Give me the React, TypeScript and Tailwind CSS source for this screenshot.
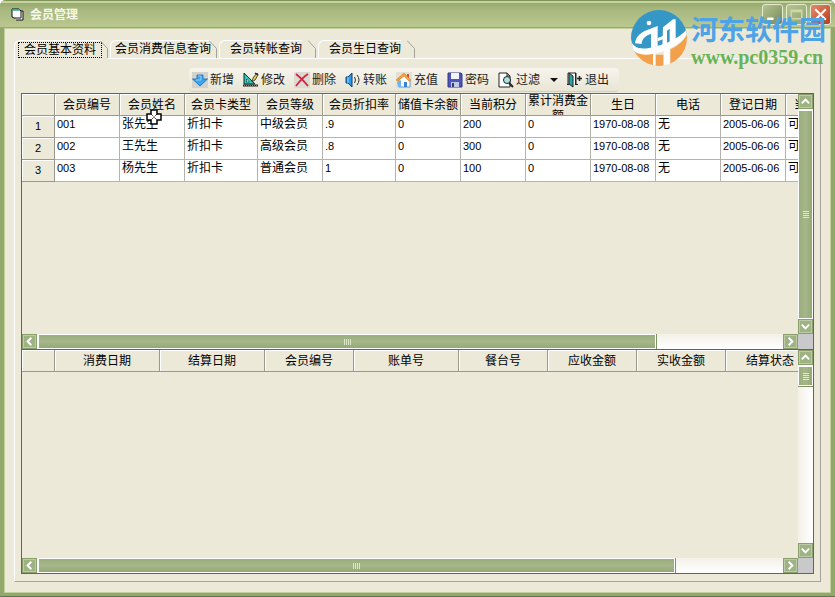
import type { ReactNode } from "react";

type Column = { title: string; width: string };

const memberColumns: Column[] = [
  { title: "会员编号", width: "w-[65px]" },
  { title: "会员姓名", width: "w-[65px]" },
  { title: "会员卡类型", width: "w-[73px]" },
  { title: "会员等级", width: "w-[65px]" },
  { title: "会员折扣率", width: "w-[73px]" },
  { title: "储值卡余额", width: "w-[65px]" },
  { title: "当前积分", width: "w-[65px]" },
  { title: "累计消费金额", width: "w-[65px]" },
  { title: "生日", width: "w-[65px]" },
  { title: "电话", width: "w-[65px]" },
  { title: "登记日期", width: "w-[65px]" },
  { title: "当前状态", width: "w-[65px]" },
];

const members = [
  ["001", "张先生", "折扣卡", "中级会员", ".9", "0", "200", "0", "1970-08-08", "无", "2005-06-06", "可用"],
  ["002", "王先生", "折扣卡", "高级会员", ".8", "0", "300", "0", "1970-08-08", "无", "2005-06-06", "可用"],
  ["003", "杨先生", "折扣卡", "普通会员", "1", "0", "100", "0", "1970-08-08", "无", "2005-06-06", "可用"],
];

const billColumns: Column[] = [
  { title: "消费日期", width: "w-[105px]" },
  { title: "结算日期", width: "w-[105px]" },
  { title: "会员编号", width: "w-[89px]" },
  { title: "账单号", width: "w-[105px]" },
  { title: "餐台号", width: "w-[89px]" },
  { title: "应收金额", width: "w-[89px]" },
  { title: "实收金额", width: "w-[89px]" },
  { title: "结算状态", width: "w-[89px]" },
];

function Icon({ children }: { children: ReactNode }) {
  return (
    <svg viewBox="0 0 16 16" className="h-4 w-4 shrink-0" aria-hidden="true">
      {children}
    </svg>
  );
}

const tools = [
  {
    label: "新增",
    icon: (
      <Icon>
        <rect width="16" height="16" fill="#d3d2cb" />
        <path d="M5 3h6v4h4.500L8 14 .5 7H5z" fill="#3ba4ee" stroke="#1668b8" strokeWidth=".8" />
        <path d="M6 4h3v4H4" fill="none" stroke="#8fd3fb" />
      </Icon>
    ),
  },
  {
    label: "修改",
    icon: (
      <Icon>
        <path d="M1 1v11h11z" fill="#35c6b4" stroke="#0b2d33" />
        <path d="M3.500 7v3h3z" fill="#fff" stroke="#0b2d33" strokeWidth=".6" />
        <path d="M0 13.500h15" stroke="#222" strokeWidth="2" />
        <path d="M1 13.500h13" stroke="#8b8b8b" strokeDasharray="1 1" />
        <path d="M14 1l-4 5-1 4 3-2 3-5z" fill="#f1cf53" stroke="#222" strokeWidth=".8" />
        <path d="M12 1l3 2" stroke="#222" strokeWidth="1.500" />
      </Icon>
    ),
  },
  {
    label: "删除",
    icon: (
      <Icon>
        <rect width="16" height="16" fill="#dcdad3" />
        <path d="M2 2c4 3 8 7 12 12M14 2C9 5 5 10 2 14" fill="none" stroke="#d3233f" strokeWidth="1.800" />
      </Icon>
    ),
  },
  {
    label: "转账",
    icon: (
      <Icon>
        <path d="M1 5h2l4-4v14l-4-4H1z" fill="#2d9ae6" stroke="#0c3f70" />
        <path d="M3 5v6" stroke="#9bdcff" />
        <path d="M9.500 5q2 3 0 6M12 3q4 5 0 10" fill="none" stroke="#333" />
      </Icon>
    ),
  },
  {
    label: "充值",
    icon: (
      <Icon>
        <rect width="16" height="16" fill="#e3e0d6" />
        <path d="M11 2h2v4h-2z" fill="#d5502f" />
        <path d="M3 8v7h11V8L8 3z" fill="#f8fbff" stroke="#6c9ad0" />
        <path d="M0 8l8-7 7 7-2 1-5-5-6 5z" fill="#f6a236" stroke="#cf7318" strokeWidth=".5" />
        <path d="M8 10h3v5H8z" fill="#3b83d0" />
        <path d="M1 10l4-2v7H2z" fill="#6db5f0" />
      </Icon>
    ),
  },
  {
    label: "密码",
    icon: (
      <Icon>
        <path d="M1 1h13l1 1v13H1z" fill="#4c55b8" stroke="#303889" />
        <path d="M4 1h8v6H4z" fill="#f3f5fc" />
        <path d="M4 10h8v5H4z" fill="#c3c8e4" />
        <path d="M5 11h2v4H5z" fill="#303889" />
      </Icon>
    ),
  },
  {
    label: "过滤",
    icon: (
      <Icon>
        <path d="M1 1h8l3 3v11H1z" fill="#fff" stroke="#222" />
        <path d="M9 1v3h3" fill="none" stroke="#222" />
        <circle cx="9" cy="8" r="3.500" fill="#a9e3e5" stroke="#222" />
        <path d="M11 11l4 4" stroke="#222" strokeWidth="2" />
      </Icon>
    ),
  },
];

const exitIcon = (
  <Icon>
    <path d="M1 12V1h8v11" fill="#fff" stroke="#222" />
    <path d="M2 1l4 3v11l-4-3z" fill="#2aa7a4" stroke="#222" />
    <path d="M8.500 1v12" stroke="#222" />
    <path d="M10 6.500h5M12.500 4v5" stroke="#222" strokeWidth="1.500" />
    <path d="M0 12.500h2M8 12.500h3" stroke="#222" />
  </Icon>
);

const arrows = {
  up: "M3 9l4-4 4 4",
  down: "M3 5l4 4 4-4",
  left: "M9 3L5 7l4 4",
  right: "M5 3l4 4-4 4",
};

function ArrowButton({ dir }: { dir: keyof typeof arrows }) {
  return (
    <button
      type="button"
      aria-label={dir}
      className="flex h-[15px] w-[15px] shrink-0 items-center justify-center border border-[#8a9f6c] bg-[#9db384] shadow-[inset_0_0_0_1px_#bccaa5]"
    >
      <svg viewBox="0 0 14 14" className="h-[13px] w-[13px]">
        <path d={arrows[dir]} fill="none" stroke="#fff" strokeWidth="2.200" />
      </svg>
    </button>
  );
}

function HorizontalBar({ thumb }: { thumb: string }) {
  return (
    <div className="flex h-[15px] bg-linear-to-b from-[#f3f1e8] to-white">
      <ArrowButton dir="left" />
      <div className="flex min-w-0 flex-1 pl-px">
        <div
          className={`${thumb} flex items-center justify-center gap-px border border-white bg-linear-to-b from-[#9aae7d] via-[#a5b78a] to-[#94a976] shadow-[1px_0_0_#7f9263]`}
        >
          {[0, 1, 2, 3].map((i) => (
            <span key={i} className="h-[6px] w-px bg-[#dfe8c8]" />
          ))}
        </div>
      </div>
      <ArrowButton dir="right" />
    </div>
  );
}

function VerticalBar({ thumb }: { thumb: string }) {
  return (
    <div className="flex w-[15px] flex-col bg-linear-to-r from-[#f3f1e8] to-white">
      <ArrowButton dir="up" />
      <div className="flex flex-1 flex-col pt-px">
        <div
          className={`${thumb} flex flex-col items-center justify-center gap-px border border-white bg-linear-to-r from-[#9aae7d] via-[#a5b78a] to-[#94a976] shadow-[0_1px_0_#7f9263]`}
        >
          {[0, 1, 2, 3].map((i) => (
            <span key={i} className="h-px w-[6px] bg-[#dfe8c8]" />
          ))}
        </div>
      </div>
      <ArrowButton dir="down" />
    </div>
  );
}

type GridProps = {
  columns: Column[];
  rows: string[][];
  hThumb: string;
  vThumb: string;
};

function DataGrid({ columns, rows, hThumb, vThumb }: GridProps) {
  return (
    <div className="grid min-h-0 min-w-0 grid-cols-[minmax(0,1fr)_15px] grid-rows-[minmax(0,1fr)_15px] border border-b-0 border-[#65645c]">
      <div className="overflow-hidden">
        <table className="w-0 table-fixed border-separate border-spacing-0">
          <thead>
            <tr>
              <th className="h-[22px] w-[33px] border-r border-b border-[#9b998d] p-0 shadow-[inset_1px_1px_0_#fff]" />
              {columns.map((col) => (
                <th
                  key={col.title}
                  className={`${col.width} h-[22px] border-r border-b border-[#9b998d] p-0 font-normal shadow-[inset_1px_1px_0_#fff]`}
                >
                  {/* long titles wrap and are cut at the row's edge */}
                  {col.title.length > 5 ? (
                    <div className="h-[21px] overflow-hidden px-px leading-[15px]">{col.title}</div>
                  ) : (
                    <div className="h-[21px] overflow-hidden leading-[23px] whitespace-nowrap">{col.title}</div>
                  )}
                </th>
              ))}
            </tr>
          </thead>
          <tbody>
            {rows.map((row, i) => (
              <tr key={row[0]}>
                <th className="h-[22px] border-r border-b border-[#9b998d] p-0 text-[11px] leading-[21px] font-normal shadow-[inset_1px_1px_0_#fff]">
                  {i + 1}
                </th>
                {row.map((cell, j) => (
                  <td
                    key={j}
                    className={`h-[22px] border-r border-b border-[#b5b4ac] bg-white p-0 pl-[2px] align-top leading-[17px] whitespace-nowrap ${
                      /^[\d.-]+$/.test(cell) ? "text-[11px]" : ""
                    }`}
                  >
                    {cell}
                  </td>
                ))}
              </tr>
            ))}
          </tbody>
        </table>
      </div>
      <VerticalBar thumb={vThumb} />
      <HorizontalBar thumb={hThumb} />
      <div className="bg-[#c9c8ca]" />
    </div>
  );
}

function Tab({ label, active = false }: { label: string; active?: boolean }) {
  return (
    <button
      type="button"
      role="tab"
      aria-selected={active}
      className={`flex bg-[#ece9d8] ${active ? "-mb-px h-[19px]" : "h-[18px]"}`}
    >
      <span
        className={`flex h-full items-center rounded-tl-md border-t border-l border-white ${
          active ? "pl-[3px]" : label.length > 6 ? "pl-1" : "pl-[10px]"
        }`}
      >
        <span className={active ? "border border-dotted border-black px-[5px] leading-[14px]" : "leading-[15px]"}>
          {label}
        </span>
      </span>
      <svg
        viewBox="0 0 8 18"
        className={`h-[18px] w-2 ${active ? "-ml-[2px]" : label.length > 6 ? "-ml-[2px]" : "ml-[6px]"}`}
      >
        <path d="M0 .5l7.500 8V18" fill="none" stroke="#a5a397" />
      </svg>
    </button>
  );
}

function WindowButtons() {
  const frame = "h-[21px] w-[21px] rounded-[3px] border border-[#e5ebcf]";
  return (
    <div className="flex gap-[3px]">
      <button type="button" aria-label="最小化" className={`${frame} bg-linear-to-br from-[#b4c48f] to-[#76895a]`}>
        <svg viewBox="0 0 18 18">
          <path d="M4 13h6" stroke="#fff" strokeWidth="2.500" />
        </svg>
      </button>
      <button type="button" aria-label="最大化" className={`${frame} bg-linear-to-br from-[#b4c48f] to-[#93a56e]`}>
        <svg viewBox="0 0 18 18">
          <path d="M4 5h10v8H4zM4 6h10" fill="none" stroke="#cbd7ac" strokeWidth="1.500" />
        </svg>
      </button>
      <button type="button" aria-label="关闭" className={`${frame} bg-linear-to-br from-[#e58a6c] to-[#b93a1d]`}>
        <svg viewBox="0 0 18 18">
          <path d="M4 4l10 10M14 4L4 14" stroke="#fff" strokeWidth="2" />
        </svg>
      </button>
    </div>
  );
}

function Watermark() {
  return (
    <div className="pointer-events-none absolute top-[10px] right-[9px] flex gap-1">
      <svg viewBox="0 0 168 168" className="h-14 w-14">
        <clipPath id="disc">
          <circle cx="84" cy="84" r="84" />
        </clipPath>
        <g clipPath="url(#disc)">
          <path d="M0 0h168v76c-30 26-66 44-110 50C30 130 8 120 0 104z" fill="#3497c5" />
          <path d="M0 116c24 18 52 18 74 14v38H0zM74 134h24v34H74zM118 118c22-10 38-24 50-44v94h-50z" fill="#f3a04c" />
          {/* white river and the letter strokes standing in it */}
          <path d="M0 88c2 22 24 32 54 26 44-8 88-26 114-56v16c-22 30-60 50-104 58C34 138 8 130 0 112z" fill="#fff" />
          <path d="M12 100C14 78 34 64 54 58l26-10v60l-20 6V72c-14 4-28 14-28 30z" fill="#fff" />
          <path d="M96 52l30-24h8v70l-18 8V56l-8 6v48l-14 4z" fill="#fff" />
          <path d="M80 84l16-6v10l-16 6zM98 116h18v52H98zM66 126h8v42h-8z" fill="#fff" />
          <circle cx="54" cy="39" r="7" fill="#fff" />
        </g>
      </svg>
      <div className="flex flex-col">
        <span className="font-['Noto_Sans_CJK_SC',sans-serif] text-[27px] leading-[38px] font-bold text-[#4da3e6]">
          河东软件园
        </span>
        <span className="font-['Liberation_Serif',serif] text-[20px] leading-[18px] font-bold text-[#67b355]">
          www.pc0359.cn
        </span>
      </div>
    </div>
  );
}

export default function App() {
  return (
    <main className="relative flex min-h-screen flex-col overflow-hidden rounded-t-md border-b border-[#5f7748] bg-[#91a86d] font-['Liberation_Sans','Noto_Sans_CJK_SC',sans-serif] text-[12px] text-black">
      <header className="flex h-[29px] items-center justify-between bg-linear-to-b from-[#91a565] via-[#a9b881] via-35% to-[#bdca90] pr-1 pl-[11px] shadow-[inset_0_1px_0_#7f9458,inset_0_3px_0_#c6d39f,inset_0_-2px_0_#98a873]">
        <div className="flex items-center gap-[6px]">
          <svg viewBox="0 0 13 13" className="h-[13px] w-[13px]">
            <path d="M4 3h8v9H5" fill="#fff" stroke="#111" />
            <path d="M1 1h7l2 2v7H3L1 9z" fill="#fff" stroke="#111" />
            <path d="M1 2h8" stroke="#2aa7a4" strokeWidth="1.500" />
          </svg>
          <h1 className="text-[12px] leading-4 font-bold text-[#f6f8ea]">会员管理</h1>
        </div>
        <WindowButtons />
      </header>

      <div className="mx-[5px] mb-[4px] flex flex-1 flex-col bg-[#ece9d8] px-[9px] pt-[11px] pb-[10px] shadow-[0_0_0_1px_#c3d09c]">
        <div role="tablist" className="relative flex items-end gap-[2px]">
          <Tab label="会员基本资料" active />
          <Tab label="会员消费信息查询" />
          <Tab label="会员转帐查询" />
          <Tab label="会员生日查询" />
        </div>

        <section className="flex flex-1 flex-col border border-t-white border-r-[#a5a397] border-b-[#a5a397] border-l-white px-[6px] pt-[9px] pb-[7px]">
          <div
            role="toolbar"
            className="mb-[2px] ml-[168px] flex h-[23px] items-center gap-[9px] self-start rounded-sm bg-linear-to-b from-[#f6f4ec] to-[#e9e6d6] pr-[10px] pl-[3px] shadow-[0_1px_0_#d2cfbf]"
          >
            {tools.map((tool) => (
              <button key={tool.label} type="button" className="flex items-center gap-[2px] leading-4 whitespace-nowrap text-[#222]">
                {tool.icon}
                {tool.label}
              </button>
            ))}
            <button type="button" aria-label="过滤选项" className="ml-px flex w-2 justify-center">
              <svg viewBox="0 0 8 4" className="h-1 w-2">
                <path d="M0 0h8L4 4z" fill="#111" />
              </svg>
            </button>
            <button type="button" className="flex items-center gap-[2px] leading-4 whitespace-nowrap text-[#222]">
              {exitIcon}
              退出
            </button>
          </div>

          <div className="grid flex-1 grid-rows-[8fr_7fr] border-b border-[#65645c]">
            <DataGrid columns={memberColumns} rows={members} hThumb="w-[83%]" vThumb="flex-1" />
            <DataGrid columns={billColumns} rows={[]} hThumb="w-[85.5%]" vThumb="h-5" />
          </div>
        </section>
      </div>

      {/* spreadsheet-style mouse pointer */}
      <svg viewBox="0 0 16 16" className="pointer-events-none absolute top-[109px] left-[146px] h-4 w-4">
        <path d="M5 1h6v4h4v6h-4v4H5v-4H1V5h4z" fill="#fff" stroke="#000" strokeWidth="1.500" />
        <path d="M5 5l6 6M11 5l-6 6" stroke="#000" strokeDasharray="1 1" />
      </svg>

      <Watermark />
    </main>
  );
}
